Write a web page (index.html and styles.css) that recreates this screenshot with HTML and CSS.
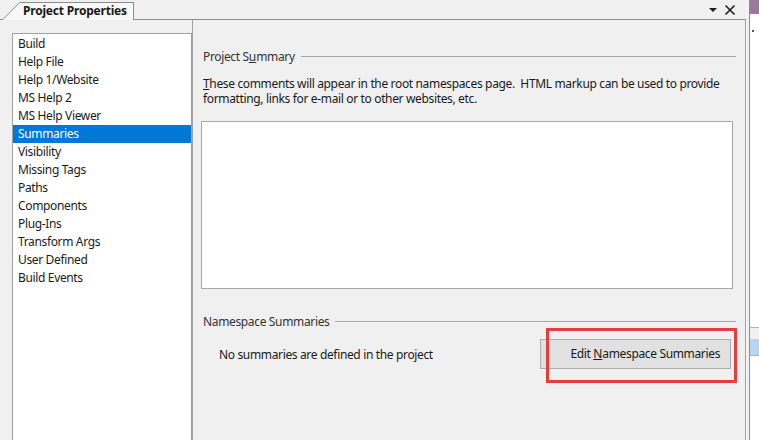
FILE: index.html
```html
<!DOCTYPE html>
<html>
<head>
<meta charset="utf-8">
<link rel="stylesheet" href="styles.css">
</head>
<body>
<div class="window">
  <div class="doc">
    <div class="tabbar">
      <svg class="tab-slant" width="20" height="20" viewBox="0 0 20 20">
        <path d="M3 19.5 L19.5 2.5 H20 V20 H3 Z" fill="#f8f8f8"/>
        <path d="M0 19.5 H3 L19.5 2.5 H20" fill="none" stroke="#8c8c8c" stroke-width="1"/>
      </svg>
      <div class="tab-label">Project Properties</div>
      <div class="tab-fill">
        <svg class="tab-btn" width="10" height="10" viewBox="0 0 10 10"><path d="M1 3 H9 L5 7 Z" fill="#1e1e1e"/></svg>
        <svg class="tab-btn" width="12" height="12" viewBox="0 0 12 12"><path d="M1.5 1.5 L10.5 10.5 M10.5 1.5 L1.5 10.5" stroke="#1e1e1e" stroke-width="1.6" fill="none"/></svg>
      </div>
    </div>
    <div class="content">
      <div class="sidebar">
        <ul class="list">
          <li>Build</li>
          <li>Help File</li>
          <li>Help 1/Website</li>
          <li>MS Help 2</li>
          <li>MS Help Viewer</li>
          <li class="selected">Summaries</li>
          <li>Visibility</li>
          <li>Missing Tags</li>
          <li>Paths</li>
          <li>Components</li>
          <li>Plug-Ins</li>
          <li>Transform Args</li>
          <li>User Defined</li>
          <li>Build Events</li>
        </ul>
      </div>
      <div class="main">
        <div class="group">
          <div class="legend"><span>Project S<u>u</u>mmary</span><span class="rule"></span></div>
          <p class="desc">These comments will appear in the root namespaces page.&nbsp; HTML markup can be used to provide formatting, links for e-mail or to other websites, etc.</p>
          <div class="textarea"></div>
        </div>
        <div class="group ns">
          <div class="legend"><span>Namespace Summaries</span><span class="rule"></span></div>
          <div class="ns-row">
            <span class="ns-text">No summaries are defined in the project</span>
            <div class="button">Edit <u>N</u>amespace Summaries</div>
          </div>
          <div class="highlight"></div>
        </div>
      </div>
    </div>
  </div>
  <div class="strip">
    <div class="strip-top"></div>
    <div class="strip-body">
      <span class="strip-dot"></span>
    </div>
    <div class="strip-sep"></div>
    <div class="strip-icon"></div>
    <div class="strip-bottom"></div>
  </div>
</div>
</body>
</html>
```
FILE: styles.css
```css
html, body {
  margin: 0;
  padding: 0;
  background: #f0f0f0;
}
body {
  font-family: "Noto Sans", "Open Sans", sans-serif;
  font-size: 12px;
  letter-spacing: -0.35px;
  color: #1a1a1a;
}
u {
  letter-spacing: 0;
}
.window {
  width: 759px;
  height: 440px;
  display: flex;
  overflow: hidden;
}
.doc {
  width: 749px;
  display: flex;
  flex-direction: column;
}
.tabbar {
  height: 20px;
  display: flex;
  align-items: stretch;
}
.tab-slant {
  display: block;
  flex: none;
}
.tab-label {
  box-sizing: border-box;
  width: 114px;
  margin-top: 2px;
  border-top: 1px solid #8c8c8c;
  border-right: 1px solid #8c8c8c;
  background: #f8f8f8;
  font-weight: bold;
  line-height: 15px;
  padding-left: 3px;
  letter-spacing: -0.2px;
  white-space: nowrap;
}
.tab-fill {
  flex: 1;
  border-bottom: 1px solid #8c8c8c;
  display: flex;
  justify-content: flex-end;
  align-items: center;
  gap: 6px;
  padding-right: 10px;
}
.tab-btn {
  display: block;
}
.content {
  flex: 1;
  display: flex;
  min-height: 0;
}
.sidebar {
  padding: 13px 0 0 12px;
  width: 180px;
  flex: none;
}
.list {
  list-style: none;
  margin: 0;
  padding: 1px 0 0 0;
  height: 100%;
  box-sizing: border-box;
  background: #fff;
  border: 1px solid #a0a0a0;
  border-bottom: none;
}
.list li {
  height: 18px;
  line-height: 18px;
  padding-left: 5px;
  white-space: nowrap;
}
.list li.selected {
  background: #0078d7;
  color: #fff;
}
.main {
  flex: 1;
  border-left: 1px solid #a0a0a0;
  border-right: 1px solid #a0a0a0;
  padding: 0 12px 0 8px;
  display: flex;
  flex-direction: column;
}
.group {
  display: flex;
  flex-direction: column;
}
.legend {
  display: flex;
  align-items: center;
  height: 16px;
  margin-top: 28px;
  padding-left: 2px;
  color: #333;
  white-space: nowrap;
}
.legend .rule {
  flex: 1;
  height: 0;
  border-top: 1px solid #a8a8a8;
  margin-left: 6px;
  margin-right: -3px;
}
.desc {
  margin: 12px 0 0 2px;
  line-height: 15px;
  color: #1a1a1a;
}
.desc::first-letter {
  text-decoration: underline;
}
.textarea {
  margin-top: 15px;
  height: 166px;
  background: #fff;
  border: 1px solid #a8a8a8;
}
.ns {
  position: relative;
}
.ns .legend {
  margin-top: 24px;
}
.ns-row {
  display: flex;
  align-items: center;
  margin-top: 10px;
}
.ns-text {
  flex: 1;
  padding-left: 18px;
}
.button {
  box-sizing: border-box;
  width: 191px;
  height: 30px;
  line-height: 28px;
  background: #e1e1e1;
  border: 1px solid #adadad;
  text-align: right;
  padding-right: 10px;
  margin-right: 2px;
  white-space: nowrap;
}
.highlight {
  position: absolute;
  left: 345px;
  top: 39px;
  width: 191px;
  height: 55px;
  box-sizing: border-box;
  border: 3px solid #e53c3c;
}
.strip {
  width: 10px;
  display: flex;
  flex-direction: column;
  border-left: 1px solid #f7f7f7;
  padding-left: 2px;
}
.strip-top {
  height: 14px;
  background: #9c7a9c;
  border-left: 1px solid #8c8c8c;
}
.strip-body {
  height: 313px;
  background: #fff;
  border-left: 1px solid #8c8c8c;
  position: relative;
}
.strip-dot {
  position: absolute;
  left: 2px;
  top: 16px;
  width: 2px;
  height: 2px;
  background: #555;
}
.strip-sep {
  height: 11px;
  background: #f0f0f0;
  border-top: 1px solid #b0b0b0;
  border-left: 1px solid #8c8c8c;
}
.strip-icon {
  height: 16px;
  background: #b8d4ee;
  border-left: 1px solid #8c8c8c;
}
.strip-bottom {
  flex: 1;
  background: #fff;
  border-top: 1px solid #b0b0b0;
  border-left: 1px solid #8c8c8c;
}
```
